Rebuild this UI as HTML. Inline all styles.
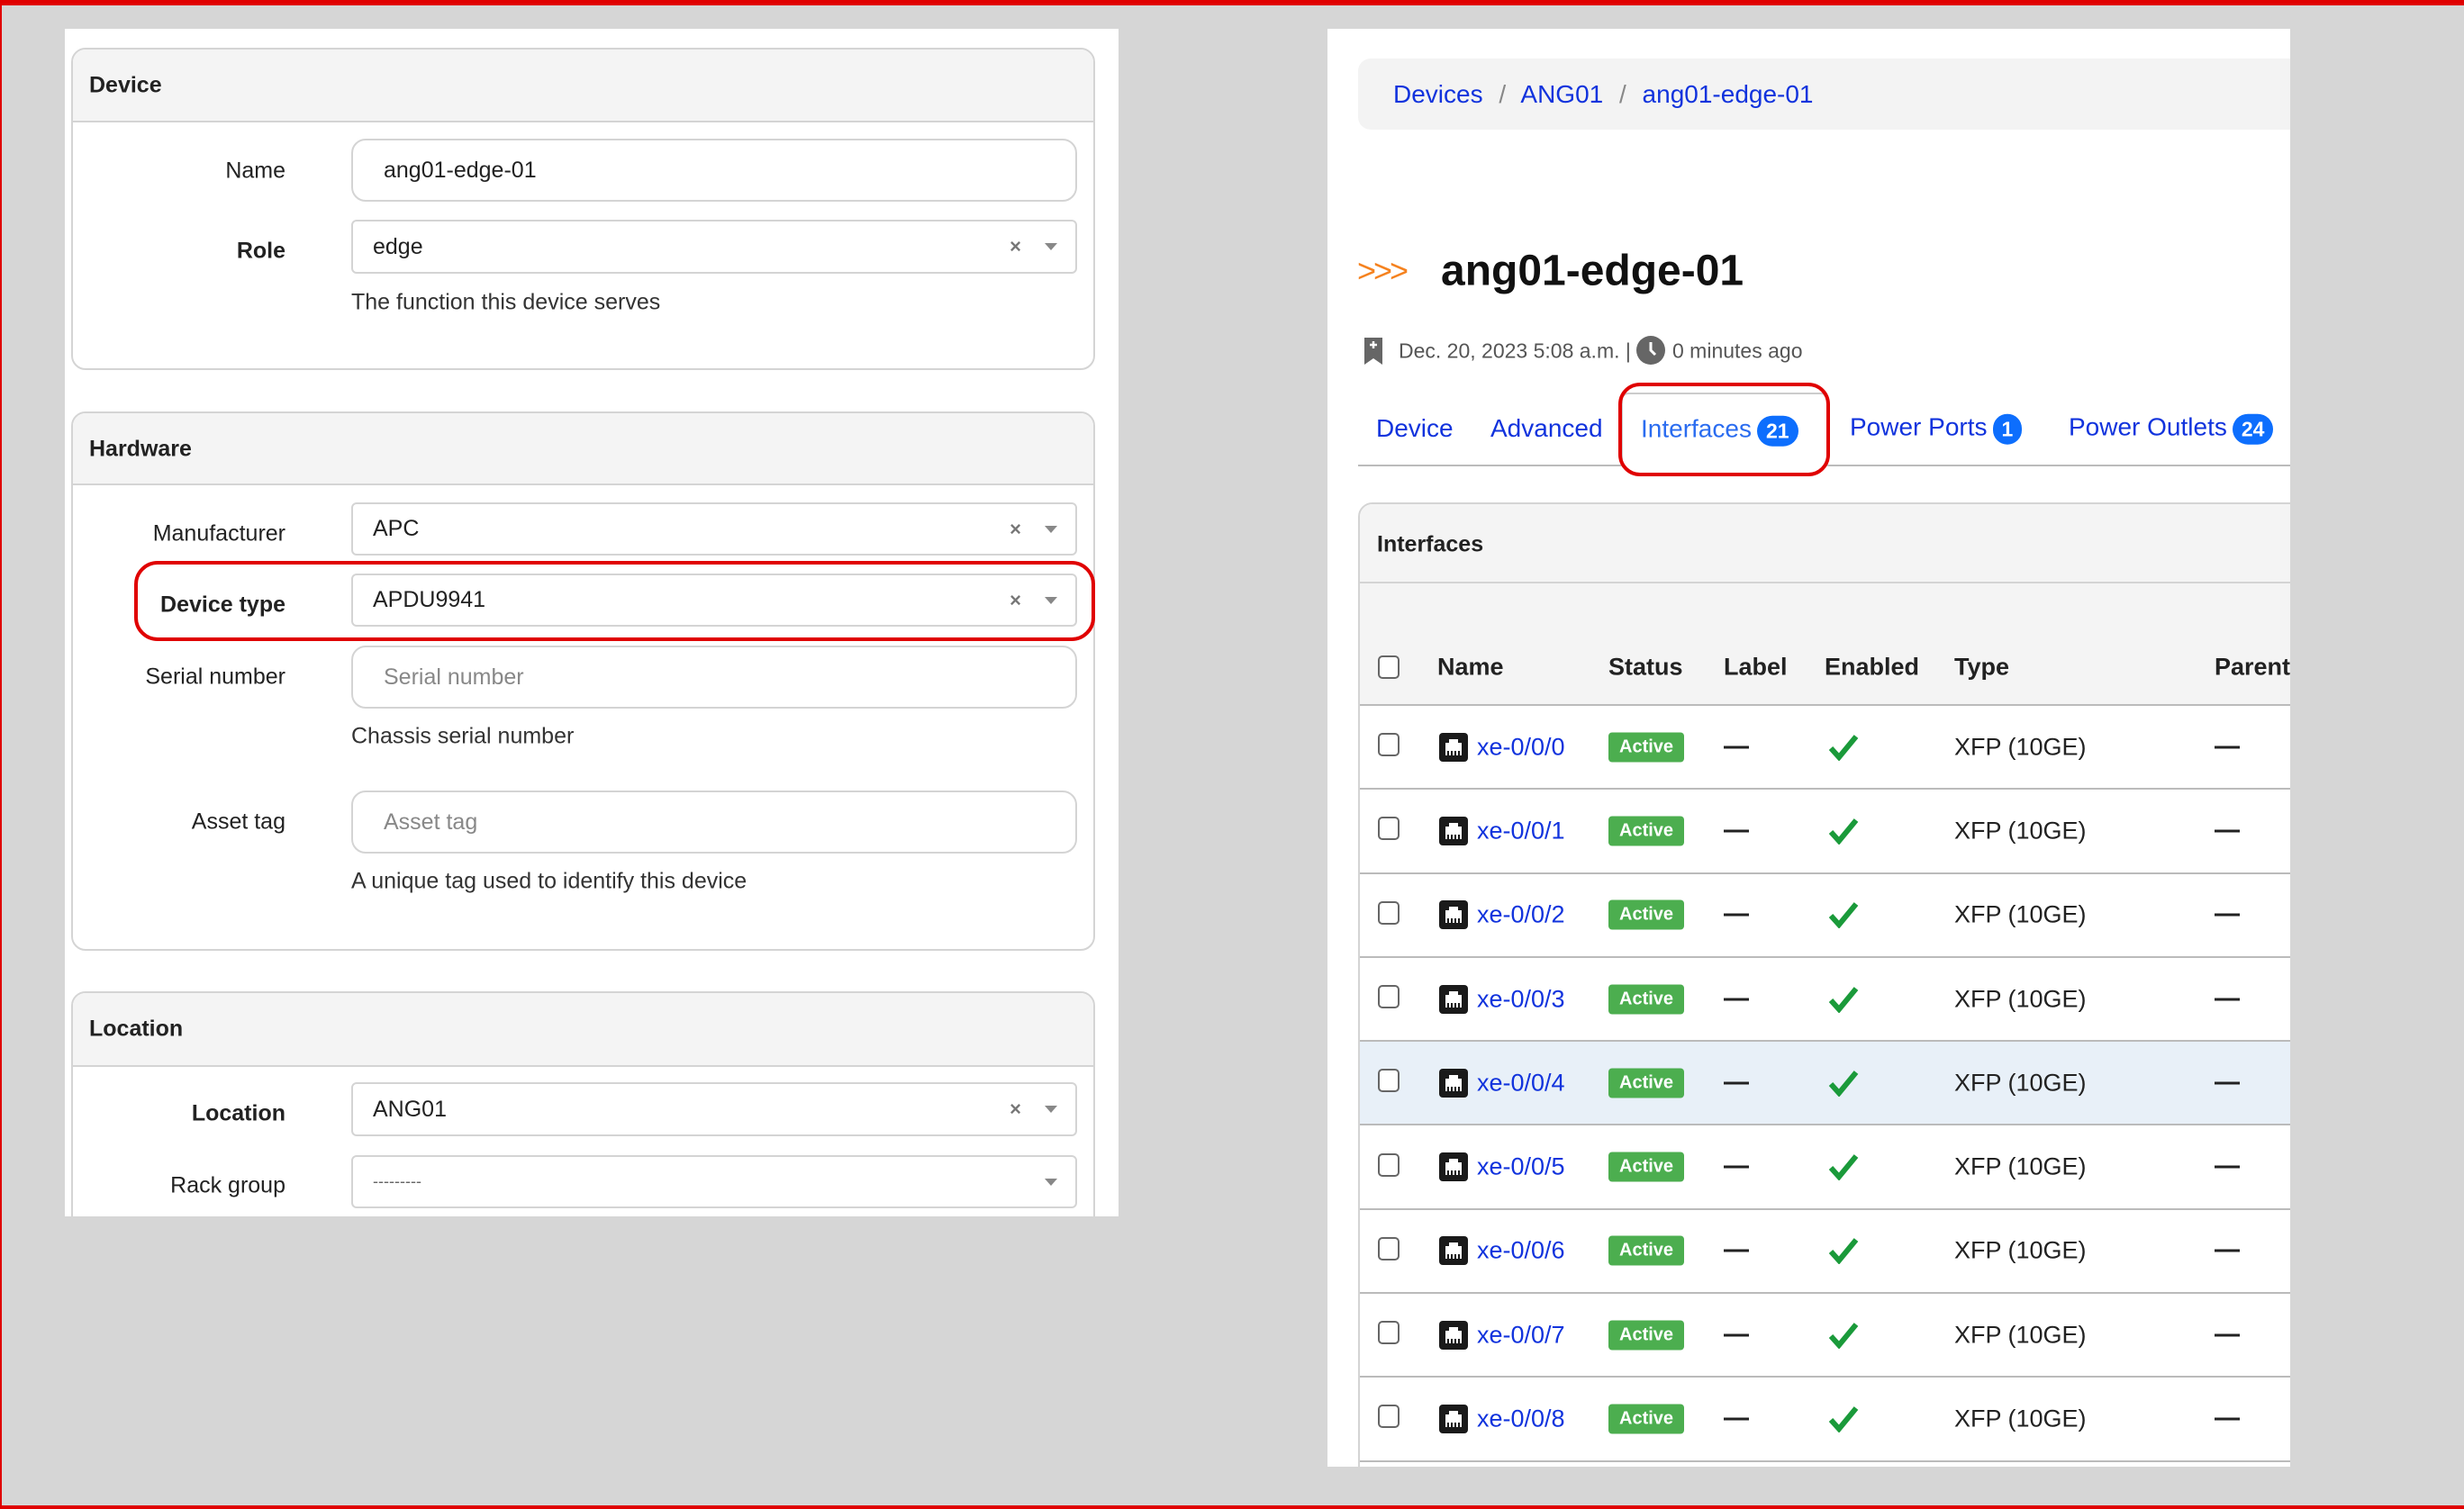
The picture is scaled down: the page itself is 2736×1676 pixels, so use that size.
<!DOCTYPE html>
<html><head><meta charset="utf-8"><style>
*{box-sizing:border-box;margin:0;padding:0}
body{width:2736px;height:1676px;background:#d6d6d6;position:relative;overflow:hidden;font-family:"Liberation Sans",sans-serif;color:#222}
.a{position:absolute}
.panel{position:absolute;background:#fff}
.card{position:absolute;border:2px solid #d4d4d4;border-radius:16px;background:#fff;overflow:hidden}
.ch{position:absolute;left:0;right:0;top:0;background:#f4f4f4;border-bottom:2px solid #d4d4d4}
.ct{position:absolute;left:18px;font-weight:bold;font-size:25px;transform:translateY(-50%)}
.lbl{position:absolute;left:0;width:317px;text-align:right;font-size:25px;transform:translateY(-50%)}
.inp{position:absolute;left:390px;width:806px;border:2px solid #d4d4d4;border-radius:16px;font-size:25px;display:flex;align-items:center;padding-left:34px}
.sel{position:absolute;left:390px;width:806px;border:2px solid #d4d4d4;border-radius:6px;font-size:25px;display:flex;align-items:center;padding-left:22px}
.x{position:absolute;right:60px;font-size:22px;color:#777;font-weight:bold}
.dd{position:absolute;right:20px;width:0;height:0;border-left:7px solid transparent;border-right:7px solid transparent;border-top:8px solid #888}
.help{position:absolute;left:390px;font-size:25px;color:#333;transform:translateY(-50%)}
.blue{color:#1133dd}
.tab{position:absolute;font-size:28px;color:#1133dd;transform:translateY(-50%);white-space:nowrap}
.bdg{display:inline-block;background:#0d6efd;color:#fff;border-radius:20px;font-size:23px;font-weight:bold;padding:3px 10px;vertical-align:middle;margin-left:6px;line-height:28px}
.row{position:absolute;left:0;width:1100px;height:93.3px;border-bottom:2px solid #bbb}
.cell{position:absolute;top:50%;transform:translateY(-50%);font-size:27px;white-space:nowrap}
.cb{position:absolute;width:24px;height:26px;border:2px solid #666;border-radius:5px;background:#fff}
.act{background:#4cae4f;color:#fff;font-weight:bold;font-size:20px;padding:5px 12px;border-radius:4px}
.dash{width:28px;height:3px;background:#222}
.ok{left:520px}
</style></head><body>
<div class="a" style="left:0;top:0;width:2736px;height:6px;background:#e00000"></div>
<div class="a" style="left:0;top:0;width:2px;height:1676px;background:#e00000"></div>
<div class="a" style="left:0;top:1672px;width:2736px;height:4px;background:#e00000"></div>

<div class="panel" style="left:72px;top:32px;width:1170px;height:1319px;overflow:hidden">
 <div style="position:absolute;left:-72px;top:-32px;width:1242px;height:1351px">
  <div class="card" style="left:79px;top:53px;width:1137px;height:358px">
   <div class="ch" style="height:81px"></div>
   <div class="ct" style="top:40px">Device</div>
  </div>
  <div class="lbl" style="top:190px">Name</div>
  <div class="inp" style="top:154px;height:70px">ang01-edge-01</div>
  <div class="lbl" style="top:279px;font-weight:bold">Role</div>
  <div class="sel" style="top:244px;height:60px">edge<span class="x">×</span><span class="dd"></span></div>
  <div class="help" style="top:336px">The function this device serves</div>

  <div class="card" style="left:79px;top:457px;width:1137px;height:599px">
   <div class="ch" style="height:80px"></div>
   <div class="ct" style="top:40px">Hardware</div>
  </div>
  <div class="lbl" style="top:593px">Manufacturer</div>
  <div class="sel" style="top:558px;height:59px">APC<span class="x">×</span><span class="dd"></span></div>
  <div class="lbl" style="top:672px;font-weight:bold">Device type</div>
  <div class="sel" style="top:637px;height:59px">APDU9941<span class="x">×</span><span class="dd"></span></div>
  <div class="a" style="left:149px;top:623px;width:1067px;height:89px;border:4px solid #e00000;border-radius:26px"></div>
  <div class="lbl" style="top:752px">Serial number</div>
  <div class="inp" style="top:717px;height:70px;color:#888">Serial number</div>
  <div class="help" style="top:818px">Chassis serial number</div>
  <div class="lbl" style="top:913px">Asset tag</div>
  <div class="inp" style="top:878px;height:70px;color:#888">Asset tag</div>
  <div class="help" style="top:979px">A unique tag used to identify this device</div>

  <div class="card" style="left:79px;top:1101px;width:1137px;height:400px">
   <div class="ch" style="height:82px"></div>
   <div class="ct" style="top:40px">Location</div>
  </div>
  <div class="lbl" style="top:1237px;font-weight:bold">Location</div>
  <div class="sel" style="top:1202px;height:60px">ANG01<span class="x">×</span><span class="dd"></span></div>
  <div class="lbl" style="top:1317px">Rack group</div>
  <div class="sel" style="top:1283px;height:59px;color:#666;font-size:18px">---------<span class="dd"></span></div>
 </div>
</div>

<div class="panel" style="left:1474px;top:32px;width:1069px;height:1597px;overflow:hidden">
 <div style="position:absolute;left:-1474px;top:-32px;width:2543px;height:1629px">
  <div class="a" style="left:1508px;top:65px;width:1100px;height:79px;background:#f3f3f3;border-radius:14px"></div>
  <div class="a blue" style="left:1547px;top:105px;transform:translateY(-50%);font-size:28px;white-space:nowrap">Devices <span style="color:#888;margin:0 10px">/</span> ANG01 <span style="color:#888;margin:0 10px">/</span> ang01-edge-01</div>

  <div class="a" style="left:1507px;top:301px;transform:translateY(-50%);font-size:36px;color:#f5821f;letter-spacing:-3px">&gt;&gt;&gt;</div>
  <div class="a" style="left:1600px;top:301px;transform:translateY(-50%);font-size:48px;font-weight:bold;color:#111;white-space:nowrap">ang01-edge-01</div>

  <svg class="a" style="left:1514px;top:374px" width="22" height="32" viewBox="0 0 22 32"><path d="M1 1H21V31L11 24L1 31Z" fill="#666"/><path d="M11 5V13M7 9H15" stroke="#fff" stroke-width="2.5"/></svg>
  <div class="a" style="left:1553px;top:390px;transform:translateY(-50%);font-size:23px;color:#555;white-space:nowrap">Dec. 20, 2023 5:08 a.m. |</div>
  <svg class="a" style="left:1816px;top:372px" width="34" height="34" viewBox="0 0 34 34"><circle cx="17" cy="17" r="16" fill="#666"/><path d="M17 8V17L22 22" stroke="#fff" stroke-width="3" fill="none"/></svg>
  <div class="a" style="left:1857px;top:390px;transform:translateY(-50%);font-size:23px;color:#555;white-space:nowrap">0 minutes ago</div>

  <div class="a" style="left:1508px;top:516px;width:1100px;height:2px;background:#bbb"></div>
  <div class="a" style="left:1800px;top:436px;width:230px;height:82px;border:2px solid #ccc;border-bottom:none;background:#fff;border-radius:8px 8px 0 0"></div>
  <div class="tab" style="left:1528px;top:476px">Device</div>
  <div class="tab" style="left:1655px;top:476px">Advanced</div>
  <div class="tab" style="left:1822px;top:478px;color:#2a6cf0">Interfaces<span class="bdg">21</span></div>
  <div class="tab" style="left:2054px;top:476px">Power Ports<span class="bdg">1</span></div>
  <div class="tab" style="left:2297px;top:476px">Power Outlets<span class="bdg">24</span></div>
  <div class="a" style="left:1797px;top:425px;width:235px;height:104px;border:4px solid #e00000;border-radius:24px"></div>

  <div class="card" style="left:1508px;top:558px;width:1100px;height:1200px;border-radius:16px 0 0 0">
   <div class="ch" style="height:224px;border-bottom:2px solid #bbb"></div>
   <div class="a" style="left:0;right:0;top:86px;height:2px;background:#d4d4d4"></div>
   <div class="ct" style="top:45px;left:19px">Interfaces</div>
   <div class="cb" style="left:20px;top:168px"></div>
   <div class="a" style="top:181px;left:0;width:1100px;font-weight:bold">
    <span class="cell" style="left:86px">Name</span>
    <span class="cell" style="left:276px">Status</span>
    <span class="cell" style="left:404px">Label</span>
    <span class="cell" style="left:516px">Enabled</span>
    <span class="cell" style="left:660px">Type</span>
    <span class="cell" style="left:949px">Parent</span>
   </div>
   <div style="position:absolute;left:0;top:224px;width:1100px">
    <div class="row" style="top:0"><div class="cb" style="left:20px;top:30px"></div><svg class="cell" style="left:88px" width="32" height="32" viewBox="0 0 32 32"><rect width="32" height="32" rx="4" fill="#1a1a1a"/><path d="M11 7H21V11H25V25H7V11H11Z" fill="#fff"/><path d="M10 20V25M14 20V25M18 20V25M22 20V25" stroke="#1a1a1a" stroke-width="2"/></svg><span class="cell blue" style="left:130px">xe-0/0/0</span><span class="cell act" style="left:276px">Active</span><span class="cell dash" style="left:404px"></span><svg class="cell ok" width="34" height="30" viewBox="0 0 34 30"><path d="M3 16L12 26L31 3" stroke="#1a9a3a" stroke-width="6" fill="none"/></svg><span class="cell" style="left:660px">XFP (10GE)</span><span class="cell dash" style="left:949px"></span></div>
    <div class="row" style="top:93.3px"><div class="cb" style="left:20px;top:30px"></div><svg class="cell" style="left:88px" width="32" height="32" viewBox="0 0 32 32"><rect width="32" height="32" rx="4" fill="#1a1a1a"/><path d="M11 7H21V11H25V25H7V11H11Z" fill="#fff"/><path d="M10 20V25M14 20V25M18 20V25M22 20V25" stroke="#1a1a1a" stroke-width="2"/></svg><span class="cell blue" style="left:130px">xe-0/0/1</span><span class="cell act" style="left:276px">Active</span><span class="cell dash" style="left:404px"></span><svg class="cell ok" width="34" height="30" viewBox="0 0 34 30"><path d="M3 16L12 26L31 3" stroke="#1a9a3a" stroke-width="6" fill="none"/></svg><span class="cell" style="left:660px">XFP (10GE)</span><span class="cell dash" style="left:949px"></span></div>
    <div class="row" style="top:186.6px"><div class="cb" style="left:20px;top:30px"></div><svg class="cell" style="left:88px" width="32" height="32" viewBox="0 0 32 32"><rect width="32" height="32" rx="4" fill="#1a1a1a"/><path d="M11 7H21V11H25V25H7V11H11Z" fill="#fff"/><path d="M10 20V25M14 20V25M18 20V25M22 20V25" stroke="#1a1a1a" stroke-width="2"/></svg><span class="cell blue" style="left:130px">xe-0/0/2</span><span class="cell act" style="left:276px">Active</span><span class="cell dash" style="left:404px"></span><svg class="cell ok" width="34" height="30" viewBox="0 0 34 30"><path d="M3 16L12 26L31 3" stroke="#1a9a3a" stroke-width="6" fill="none"/></svg><span class="cell" style="left:660px">XFP (10GE)</span><span class="cell dash" style="left:949px"></span></div>
    <div class="row" style="top:279.9px"><div class="cb" style="left:20px;top:30px"></div><svg class="cell" style="left:88px" width="32" height="32" viewBox="0 0 32 32"><rect width="32" height="32" rx="4" fill="#1a1a1a"/><path d="M11 7H21V11H25V25H7V11H11Z" fill="#fff"/><path d="M10 20V25M14 20V25M18 20V25M22 20V25" stroke="#1a1a1a" stroke-width="2"/></svg><span class="cell blue" style="left:130px">xe-0/0/3</span><span class="cell act" style="left:276px">Active</span><span class="cell dash" style="left:404px"></span><svg class="cell ok" width="34" height="30" viewBox="0 0 34 30"><path d="M3 16L12 26L31 3" stroke="#1a9a3a" stroke-width="6" fill="none"/></svg><span class="cell" style="left:660px">XFP (10GE)</span><span class="cell dash" style="left:949px"></span></div>
    <div class="row" style="top:373.2px;background:#e8f0f8"><div class="cb" style="left:20px;top:30px"></div><svg class="cell" style="left:88px" width="32" height="32" viewBox="0 0 32 32"><rect width="32" height="32" rx="4" fill="#1a1a1a"/><path d="M11 7H21V11H25V25H7V11H11Z" fill="#fff"/><path d="M10 20V25M14 20V25M18 20V25M22 20V25" stroke="#1a1a1a" stroke-width="2"/></svg><span class="cell blue" style="left:130px">xe-0/0/4</span><span class="cell act" style="left:276px">Active</span><span class="cell dash" style="left:404px"></span><svg class="cell ok" width="34" height="30" viewBox="0 0 34 30"><path d="M3 16L12 26L31 3" stroke="#1a9a3a" stroke-width="6" fill="none"/></svg><span class="cell" style="left:660px">XFP (10GE)</span><span class="cell dash" style="left:949px"></span></div>
    <div class="row" style="top:466.5px"><div class="cb" style="left:20px;top:30px"></div><svg class="cell" style="left:88px" width="32" height="32" viewBox="0 0 32 32"><rect width="32" height="32" rx="4" fill="#1a1a1a"/><path d="M11 7H21V11H25V25H7V11H11Z" fill="#fff"/><path d="M10 20V25M14 20V25M18 20V25M22 20V25" stroke="#1a1a1a" stroke-width="2"/></svg><span class="cell blue" style="left:130px">xe-0/0/5</span><span class="cell act" style="left:276px">Active</span><span class="cell dash" style="left:404px"></span><svg class="cell ok" width="34" height="30" viewBox="0 0 34 30"><path d="M3 16L12 26L31 3" stroke="#1a9a3a" stroke-width="6" fill="none"/></svg><span class="cell" style="left:660px">XFP (10GE)</span><span class="cell dash" style="left:949px"></span></div>
    <div class="row" style="top:559.8px"><div class="cb" style="left:20px;top:30px"></div><svg class="cell" style="left:88px" width="32" height="32" viewBox="0 0 32 32"><rect width="32" height="32" rx="4" fill="#1a1a1a"/><path d="M11 7H21V11H25V25H7V11H11Z" fill="#fff"/><path d="M10 20V25M14 20V25M18 20V25M22 20V25" stroke="#1a1a1a" stroke-width="2"/></svg><span class="cell blue" style="left:130px">xe-0/0/6</span><span class="cell act" style="left:276px">Active</span><span class="cell dash" style="left:404px"></span><svg class="cell ok" width="34" height="30" viewBox="0 0 34 30"><path d="M3 16L12 26L31 3" stroke="#1a9a3a" stroke-width="6" fill="none"/></svg><span class="cell" style="left:660px">XFP (10GE)</span><span class="cell dash" style="left:949px"></span></div>
    <div class="row" style="top:653.1px"><div class="cb" style="left:20px;top:30px"></div><svg class="cell" style="left:88px" width="32" height="32" viewBox="0 0 32 32"><rect width="32" height="32" rx="4" fill="#1a1a1a"/><path d="M11 7H21V11H25V25H7V11H11Z" fill="#fff"/><path d="M10 20V25M14 20V25M18 20V25M22 20V25" stroke="#1a1a1a" stroke-width="2"/></svg><span class="cell blue" style="left:130px">xe-0/0/7</span><span class="cell act" style="left:276px">Active</span><span class="cell dash" style="left:404px"></span><svg class="cell ok" width="34" height="30" viewBox="0 0 34 30"><path d="M3 16L12 26L31 3" stroke="#1a9a3a" stroke-width="6" fill="none"/></svg><span class="cell" style="left:660px">XFP (10GE)</span><span class="cell dash" style="left:949px"></span></div>
    <div class="row" style="top:746.4px"><div class="cb" style="left:20px;top:30px"></div><svg class="cell" style="left:88px" width="32" height="32" viewBox="0 0 32 32"><rect width="32" height="32" rx="4" fill="#1a1a1a"/><path d="M11 7H21V11H25V25H7V11H11Z" fill="#fff"/><path d="M10 20V25M14 20V25M18 20V25M22 20V25" stroke="#1a1a1a" stroke-width="2"/></svg><span class="cell blue" style="left:130px">xe-0/0/8</span><span class="cell act" style="left:276px">Active</span><span class="cell dash" style="left:404px"></span><svg class="cell ok" width="34" height="30" viewBox="0 0 34 30"><path d="M3 16L12 26L31 3" stroke="#1a9a3a" stroke-width="6" fill="none"/></svg><span class="cell" style="left:660px">XFP (10GE)</span><span class="cell dash" style="left:949px"></span></div>
   </div>
  </div>
 </div>
</div>
</body></html>
